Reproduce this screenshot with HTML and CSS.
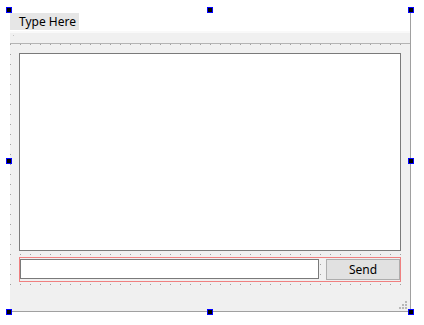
FILE: index.html
```html
<!DOCTYPE html>
<html lang="en">
  <head>
    <meta charset="UTF-8" />
    <meta name="viewport" content="width=device-width, initial-scale=1.0" />
    <title>MainWindow - Designer</title>
    <link rel="stylesheet" href="styles.css">
  </head>
  <body>
    <div class="designer">
      <div class="form">
        <div class="menubar">
          <span class="menu-item">Type Here</span>
        </div>

        <div class="toolbar">
          <span class="toolbar-dot"></span>
        </div>

        <div class="central">
          <div class="text-edit"></div>
          <div class="hbox">
            <div class="line-edit"></div>
            <div class="send-btn">Send</div>
          </div>
        </div>

        <div class="statusbar">
          <svg class="size-grip" width="8" height="8" viewBox="0 0 8 8">
            <rect x="6" y="0" width="2" height="2" />
            <rect x="3" y="3" width="2" height="2" />
            <rect x="6" y="3" width="2" height="2" />
            <rect x="0" y="6" width="2" height="2" />
            <rect x="3" y="6" width="2" height="2" />
            <rect x="6" y="6" width="2" height="2" />
          </svg>
        </div>
      </div>

      <!-- selection handles -->
      <span class="handle h-top h-left"></span>
      <span class="handle h-top h-mid"></span>
      <span class="handle h-top h-right"></span>
      <span class="handle h-center h-left"></span>
      <span class="handle h-center h-right"></span>
      <span class="handle h-bottom h-left"></span>
      <span class="handle h-bottom h-mid"></span>
      <span class="handle h-bottom h-right"></span>
    </div>
  </body>
</html>
```

FILE: styles.css
```css
* {
  margin: 0;
  padding: 0;
  box-sizing: border-box;
}

body {
  font-family: "Noto Sans", "Open Sans", sans-serif;
  font-size: 12px;
  color: #000;
  background: #ffffff;
}

.designer {
  position: relative;
  width: 424px;
  height: 325px;
  padding: 10px 0 0 10px;
}

.form {
  width: 401px;
  height: 302px;
  display: flex;
  flex-direction: column;
  background: #f0f0f0;
  border-right: 1px solid #a0a0a0;
  border-bottom: 1px solid #a0a0a0;
}

.menubar {
  flex: none;
  height: 21px;
  background: #ffffff;
}

.menu-item {
  display: inline-block;
  width: 69px;
  height: 17px;
  margin-top: 3px;
  padding-left: 9px;
  line-height: 17px;
  background: #e6e6e6;
}

.toolbar {
  flex: none;
  height: 13px;
  border-top: 2px solid #f9f9f9;
  border-bottom: 1px solid #b4b4b4;
}

.toolbar-dot {
  display: block;
  width: 1px;
  height: 1px;
  margin: 2px 0 0 3px;
  background: #c4c4c4;
}

.central {
  flex: 1;
  display: flex;
  flex-direction: column;
  gap: 6px;
  padding: 9px;
  background-image: conic-gradient(at 1px 1px, transparent 75%, #a0a0a0 0);
  background-size: 10px 10px;
}

.text-edit {
  flex: 1;
  background: #ffffff;
  border: 1px solid #7a7a7a;
}

.hbox {
  flex: none;
  height: 25px;
  display: flex;
  align-items: flex-start;
  gap: 7px;
  padding-top: 1px;
  border: 1px solid #f08080;
}

.line-edit {
  width: 299px;
  height: 20px;
  background: #ffffff;
  border: 1px solid #7a7a7a;
}

.send-btn {
  width: 74px;
  height: 21px;
  display: flex;
  align-items: center;
  justify-content: center;
  background: #e1e1e1;
  border: 1px solid #adadad;
}

.statusbar {
  flex: none;
  height: 20px;
  display: flex;
  justify-content: flex-end;
  align-items: flex-end;
}

.size-grip {
  display: block;
  margin: 0 3px 2px 0;
  fill: #b8b8b8;
}

.handle {
  position: absolute;
  width: 6px;
  height: 6px;
  background: #000;
  border: 1px solid #0000ff;
}

.h-top { top: 7px; }
.h-center { top: 158px; }
.h-bottom { top: 309px; }
.h-left { left: 6px; }
.h-mid { left: 207px; }
.h-right { left: 408px; }
```
